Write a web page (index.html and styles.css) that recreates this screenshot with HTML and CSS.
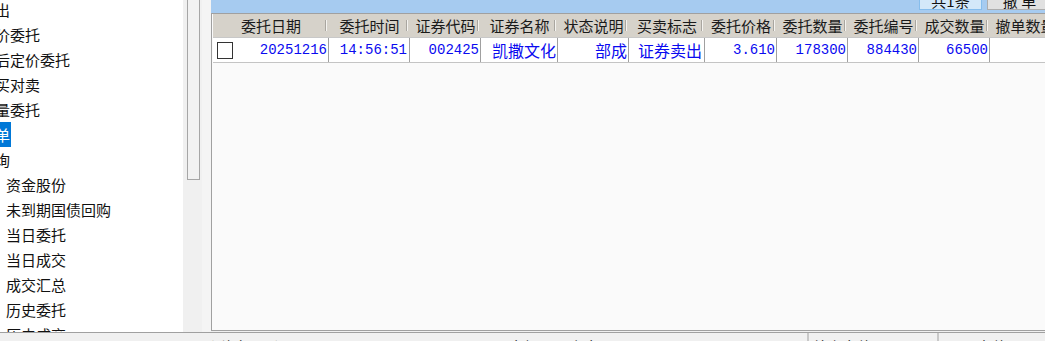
FILE: index.html
```html
<!DOCTYPE html>
<html lang="zh-CN">
<head>
    <meta charset="UTF-8">
    <meta name="viewport" content="width=device-width, initial-scale=1.0">
    <title>撤单</title>
    <link rel="stylesheet" href="styles.css">
</head>
<body>
    <div class="app">
        <div class="main">
            <div class="tree-pane">
                <ul class="tree">
                    <li>卖出</li>
                    <li>市价委托</li>
                    <li>盘后定价委托</li>
                    <li>对买对卖</li>
                    <li>批量委托</li>
                    <li class="sel"><span>撤单</span></li>
                    <li>查询</li>
                    <li class="sub">资金股份</li>
                    <li class="sub">未到期国债回购</li>
                    <li class="sub">当日委托</li>
                    <li class="sub">当日成交</li>
                    <li class="sub">成交汇总</li>
                    <li class="sub">历史委托</li>
                    <li class="sub">历史成交</li>
                </ul>
            </div>
            <div class="vscroll">
                <div class="thumb"></div>
            </div>
            <div class="gap"></div>
            <div class="grid-pane">
                <div class="toolbar">
                    <button class="tb-btn count">共1条</button>
                    <button class="tb-btn cancel">撤 单</button>
                </div>
                <div class="grid">
                    <div class="row head">
                        <div class="cell c0">委托日期</div>
                        <div class="cell c1">委托时间</div>
                        <div class="cell c2">证券代码</div>
                        <div class="cell c3">证券名称</div>
                        <div class="cell c4">状态说明</div>
                        <div class="cell c5">买卖标志</div>
                        <div class="cell c6">委托价格</div>
                        <div class="cell c7">委托数量</div>
                        <div class="cell c8">委托编号</div>
                        <div class="cell c9">成交数量</div>
                        <div class="cell c10">撤单数量</div>
                    </div>
                    <div class="row data">
                        <div class="cell c0"><span class="check"></span><span class="num">20251216</span></div>
                        <div class="cell c1 num">14:56:51</div>
                        <div class="cell c2 num">002425</div>
                        <div class="cell c3">凯撒文化</div>
                        <div class="cell c4">部成</div>
                        <div class="cell c5">证券卖出</div>
                        <div class="cell c6 num">3.610</div>
                        <div class="cell c7 num">178300</div>
                        <div class="cell c8 num">884430</div>
                        <div class="cell c9 num">66500</div>
                        <div class="cell c10 num"></div>
                    </div>
                </div>
            </div>
        </div>
        <div class="statusbar">
            <div class="sb-cell first">
                <span class="s1">币 种人民币</span>
                <span class="s2">余额可用资金</span>
                <span class="s3">可</span>
            </div>
            <div class="sb-cell second">
                <span class="s4">总资产值</span>
            </div>
            <div class="sb-cell third">
                <span class="s5">股票市值</span>
            </div>
        </div>
    </div>
</body>
</html>
```

FILE: styles.css
```css
body {
    margin: 0;
    background-color: #f0f0f0;
    font-family: "Noto Sans CJK SC", sans-serif;
    color: #111;
    overflow: hidden;
}

.app {
    display: flex;
    flex-direction: column;
    height: 341px;
    overflow: hidden;
}

.main {
    display: flex;
    height: 332px;
    flex-shrink: 0;
    overflow: hidden;
}

/* left tree */
.tree-pane {
    width: 183px;
    flex-shrink: 0;
    background-color: white;
    overflow: hidden;
}

.tree {
    list-style: none;
    margin: -3px 0 0 -20px;
    padding: 0;
    font-size: 15px;
    line-height: 25px;
    white-space: nowrap;
}

.tree li {
    height: 25px;
}

.tree .sub {
    padding-left: 26px;
}

.tree .sel span {
    display: inline-block;
    background-color: #0078d7;
    color: white;
    padding-right: 1px;
}

.vscroll {
    width: 19px;
    flex-shrink: 0;
    background-color: #f0f0f0;
}

.thumb {
    margin: -2px 0 0 4px;
    width: 11px;
    height: 180px;
    border: 1px solid #a6a6a6;
    background-color: #f2f2f2;
}

.gap {
    width: 9px;
    flex-shrink: 0;
    background-color: #f4f4f4;
}

/* right grid */
.grid-pane {
    width: 860px;
    flex-shrink: 0;
    display: flex;
    flex-direction: column;
}

.toolbar {
    height: 13px;
    flex-shrink: 0;
    background-color: #a6cbf0;
    display: flex;
    justify-content: flex-end;
    align-items: flex-end;
    gap: 5px;
    padding: 0 19px 3px 0;
    box-sizing: border-box;
    overflow: hidden;
}

.tb-btn {
    flex-shrink: 0;
    height: 21px;
    padding: 0;
    font-family: "Noto Sans CJK SC", sans-serif;
    font-size: 15px;
    line-height: 21px;
    color: #111;
    text-align: center;
}

.tb-btn.count {
    width: 63px;
    background-color: #d3e8f9;
    border: 1px solid #86bdec;
}

.tb-btn.cancel {
    width: 65px;
    background-color: #e1e1e1;
    border: 1px solid #adadad;
}

.grid {
    flex: 1;
    background-color: #fafafa;
    border-left: 1px solid #a0a0a0;
    border-top: 1px solid #a0a0a0;
    border-bottom: 1px solid #a0a0a0;
    padding-left: 1px;
    margin-bottom: 1px;
}

.row {
    display: flex;
    white-space: nowrap;
}

.cell {
    box-sizing: border-box;
    flex-shrink: 0;
    overflow: hidden;
}

.c0 { width: 116px; }
.c1 { width: 81px; }
.c2 { width: 71px; }
.c3 { width: 77px; }
.c4 { width: 71px; }
.c5 { width: 76px; }
.c6 { width: 72px; }
.c7 { width: 71px; }
.c8 { width: 71px; }
.c9 { width: 71px; }
.c10 { width: 71px; }

.head {
    height: 24px;
    background-color: #d6d2ca;
    border-bottom: 1px solid #c8c8c8;
    box-sizing: border-box;
}

.head .cell {
    position: relative;
    font-size: 15px;
    line-height: 23px;
    text-align: center;
    color: #1a1a1a;
}

.head .cell::after {
    content: "";
    position: absolute;
    right: 2px;
    top: 6px;
    height: 11px;
    border-left: 1px solid #a9a6a0;
    border-right: 1px solid #f4f3f0;
}

.data {
    height: 25px;
    background-color: white;
    border-bottom: 1px solid #c4c4c4;
    box-sizing: border-box;
}

.data .cell {
    border-right: 1px solid #a0a0a0;
    font-size: 16px;
    line-height: 24px;
    text-align: right;
    padding-right: 1px;
    color: #0a0af0;
}

.data .c1, .data .c5 {
    padding-right: 2px;
}

.data .c0 {
    display: flex;
    align-items: center;
    justify-content: space-between;
}

.data .num {
    font-family: "Liberation Mono", monospace;
    font-size: 14px;
}

.check {
    width: 16px;
    height: 17px;
    margin-left: 4px;
    box-sizing: border-box;
    border: 1px solid #333;
    background-color: white;
}

/* bottom status bar, mostly cut off */
.statusbar {
    display: flex;
    height: 9px;
    border-top: 1px solid #a0a0a0;
    background-color: #f0f0f0;
    overflow: hidden;
    font-size: 15px;
    line-height: 20px;
    white-space: nowrap;
}

.sb-cell {
    flex-shrink: 0;
    display: flex;
    padding-top: 4px;
    box-sizing: border-box;
}

.sb-cell.first {
    width: 807px;
}

.sb-cell.second {
    width: 130px;
    border-left: 2px solid #c8c8c8;
}

.sb-cell.third {
    width: 200px;
    border-left: 2px solid #c8c8c8;
}

.s1 { margin-left: 200px; }
.s2 { margin-left: 230px; }
.s3 { margin-left: 132px; }
.s4 { margin-left: 3px; }
.s5 { margin-left: 8px; }
```
